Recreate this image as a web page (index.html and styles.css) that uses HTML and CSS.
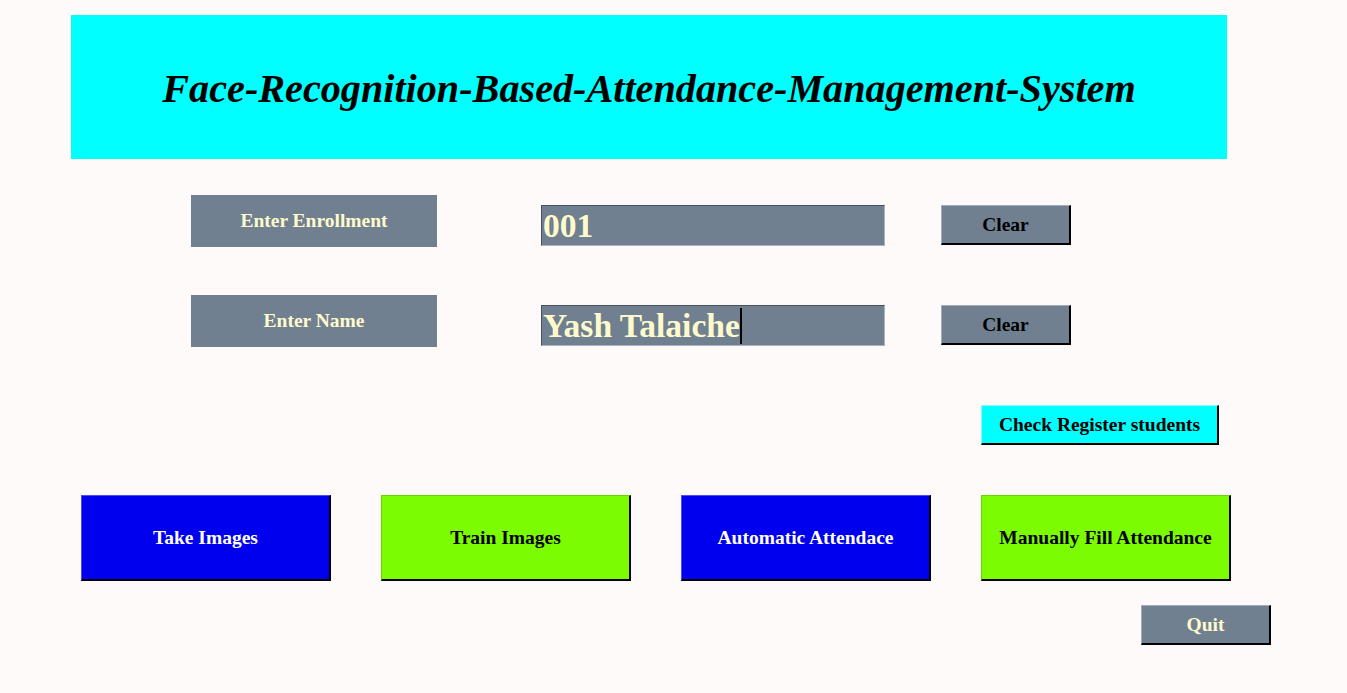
FILE: index.html
```html
<!DOCTYPE html>
<html>
<head>
<meta charset="utf-8">
<title>Face Recognition Attendance</title>
<link rel="stylesheet" href="styles.css">
</head>
<body>
<div class="window">
  <header class="banner">
    <h1 class="title">Face-Recognition-Based-Attendance-Management-System</h1>
  </header>

  <div class="form-row row-enroll">
    <div class="label">Enter Enrollment</div>
    <div class="entry"><span class="entry-text">001</span></div>
    <button class="btn btn-clear">Clear</button>
  </div>

  <div class="form-row row-name">
    <div class="label">Enter Name</div>
    <div class="entry"><span class="entry-text">Yash Talaiche</span><span class="caret"></span></div>
    <button class="btn btn-clear">Clear</button>
  </div>

  <div class="check-row">
    <button class="btn btn-check">Check Register students</button>
  </div>

  <div class="action-row">
    <button class="btn btn-big btn-blue">Take Images</button>
    <button class="btn btn-big btn-green">Train Images</button>
    <button class="btn btn-big btn-blue">Automatic Attendace</button>
    <button class="btn btn-big btn-green">Manually Fill Attendance</button>
  </div>

  <div class="quit-row">
    <button class="btn btn-quit">Quit</button>
  </div>
</div>
</body>
</html>
```

FILE: styles.css
```css
* { box-sizing: border-box; }

html, body {
  margin: 0;
  padding: 0;
  background: #fffafa;
  width: 1347px;
  height: 693px;
  overflow: hidden;
  font-family: "Liberation Serif", "Times New Roman", serif;
}

.window {
  display: flex;
  flex-direction: column;
  align-items: flex-start;
}

.banner {
  margin: 15px 0 0 71px;
  width: 1156px;
  height: 144px;
  background: #00ffff;
  display: flex;
  align-items: center;
  justify-content: center;
}

.title {
  margin: 2px 0 0 0;
  font-size: 40.2px;
  font-weight: bold;
  font-style: italic;
  color: #000;
  letter-spacing: 0;
  white-space: nowrap;
}

.form-row {
  display: flex;
  align-items: flex-start;
}

.row-enroll { margin-top: 36px; }
.row-name { margin-top: 48px; }

.label {
  margin-left: 191px;
  width: 246px;
  height: 52px;
  background: #708090;
  color: #fffacd;
  font-size: 19.5px;
  font-weight: bold;
  display: flex;
  align-items: center;
  justify-content: center;
  padding-bottom: 1px;
}

.entry {
  margin: 10px 0 0 104px;
  width: 344px;
  height: 41px;
  background: #708090;
  border-style: solid;
  border-width: 1px;
  border-color: #47525d #a9b3bf #a9b3bf #47525d;
  display: flex;
  align-items: center;
  padding-left: 1px;
}

.entry-text {
  color: #fffacd;
  font-size: 33.6px;
  font-weight: bold;
  line-height: 1;
  margin-top: 1px;
  white-space: nowrap;
}

.caret {
  width: 2px;
  height: 36px;
  background: #000;
  margin-left: 0;
}

.btn {
  font-family: "Liberation Serif", "Times New Roman", serif;
  font-weight: bold;
  font-size: 19.5px;
  padding: 0;
  margin: 0;
  display: flex;
  align-items: center;
  justify-content: center;
  border-style: solid;
  border-width: 1px 2px 2px 1px;
  cursor: default;
  white-space: nowrap;
}

.btn-clear {
  margin: 10px 0 0 56px;
  width: 130px;
  height: 40px;
  background: #708090;
  color: #000;
  border-color: #a3adb9 #000 #000 #a3adb9;
}

.check-row {
  margin: 58px 0 0 981px;
}

.btn-check {
  width: 238px;
  height: 40px;
  background: #00ffff;
  color: #000;
  border-color: #7fffff #000 #000 #7fffff;
}

.action-row {
  margin: 50px 0 0 81px;
  display: flex;
  gap: 50px;
}

.btn-big {
  width: 250px;
  height: 86px;
}

.btn-blue {
  background: #0000ee;
  color: #ffffff;
  border-color: #4c4cff #000 #000 #4c4cff;
}

.btn-green {
  background: #7cfc00;
  color: #000;
  border-color: #6ad600 #000 #000 #6ad600;
}

.quit-row {
  margin: 24px 0 0 1141px;
}

.btn-quit {
  width: 130px;
  height: 40px;
  background: #708090;
  color: #fffacd;
  border-color: #a3adb9 #000 #000 #a3adb9;
}
```
